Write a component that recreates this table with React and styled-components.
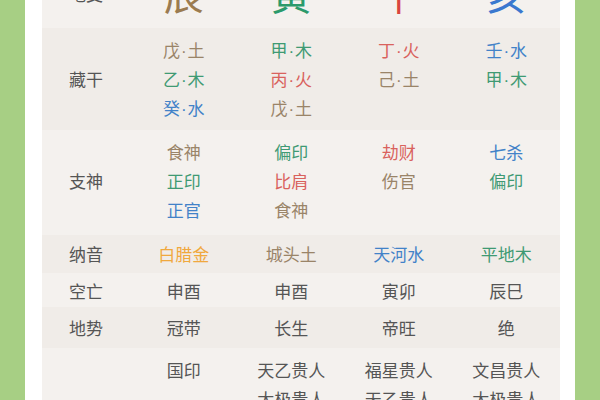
import React from "react";
import styled, { createGlobalStyle } from "styled-components";

const GlobalStyle = createGlobalStyle`
  html, body {
    margin: 0;
    padding: 0;
    width: 600px;
    height: 400px;
    overflow: hidden;
    background: #ffffff;
    font-family: "Noto Sans CJK SC", "Noto Sans", sans-serif;
  }
`;

const COLORS = {
  earth: "#9a8468",
  wood: "#3f9a73",
  fire: "#d9625d",
  water: "#4282c8",
  metal: "#f0a83e",
  plain: "#555555",
};

const Page = styled.div`
  display: flex;
  width: 600px;
  height: 400px;
  overflow: hidden;
`;

const GreenBar = styled.div`
  width: 25px;
  flex: none;
  background: #a7cf84;
`;

const Sheet = styled.div`
  flex: 1;
  background: #ffffff;
  padding: 0 15px 0 17px;
`;

const Table = styled.div`
  margin-top: -42px;
  display: flex;
  flex-direction: column;
`;

const Row = styled.div`
  display: grid;
  grid-template-columns: 88px repeat(4, 1fr);
  align-items: start;
  background: ${(p) => (p.$shade ? "#f0ece8" : "#f4f1ee")};
  padding: ${(p) => p.$pad || "0"};
`;

const Label = styled.div`
  align-self: center;
  text-align: center;
  font-size: 17px;
  line-height: 29px;
  color: #555;
`;

const Cell = styled.div`
  display: flex;
  flex-direction: column;
  align-items: center;
  align-self: ${(p) => (p.$center ? "center" : "start")};
`;

const Line = styled.div`
  height: 29px;
  font-size: 17px;
  line-height: 29px;
  color: ${(p) => COLORS[p.$el] || COLORS.plain};
  white-space: nowrap;
`;

const Dot = styled.span`
  font-family: "Liberation Sans", sans-serif;
  line-height: 1;
  margin: 0 1px;
`;

const Big = styled.span`
  font-size: 40px;
  line-height: 70px;
  color: ${(p) => p.$color};
`;

const branches = [
  { ch: "辰", color: "#9b7b50" },
  { ch: "寅", color: "#2b9a6b" },
  { ch: "午", color: "#d9443f" },
  { ch: "亥", color: "#3a78cf" },
];

const rows = [
  {
    label: "藏干",
    pad: "7px 0 8px",
    shade: true,
    cols: [
      [["戊·土", "earth"], ["乙·木", "wood"], ["癸·水", "water"]],
      [["甲·木", "wood"], ["丙·火", "fire"], ["戊·土", "earth"]],
      [["丁·火", "fire"], ["己·土", "earth"]],
      [["壬·水", "water"], ["甲·木", "wood"]],
    ],
  },
  {
    label: "支神",
    pad: "7px 0 11px",
    cols: [
      [["食神", "earth"], ["正印", "wood"], ["正官", "water"]],
      [["偏印", "wood"], ["比肩", "fire"], ["食神", "earth"]],
      [["劫财", "fire"], ["伤官", "earth"]],
      [["七杀", "water"], ["偏印", "wood"]],
    ],
  },
  {
    label: "纳音",
    pad: "4px 0 5px",
    shade: true,
    cols: [
      [["白腊金", "metal"]],
      [["城头土", "earth"]],
      [["天河水", "water"]],
      [["平地木", "wood"]],
    ],
  },
  {
    label: "空亡",
    pad: "3px 0 2px",
    cols: [[["申酉"]], [["申酉"]], [["寅卯"]], [["辰巳"]]],
  },
  {
    label: "地势",
    pad: "6px 0 6px",
    shade: true,
    cols: [[["冠带"]], [["长生"]], [["帝旺"]], [["绝"]]],
  },
  {
    label: "神煞",
    pad: "7px 0 8px",
    cols: [
      [["国印"]],
      [["天乙贵人"], ["太极贵人"], ["学堂"], ["月德贵人"]],
      [["福星贵人"], ["天乙贵人"], ["金舆"]],
      [["文昌贵人"], ["太极贵人"], ["驿马"]],
    ],
  },
];

const renderText = (text) => {
  const parts = text.split("·");
  if (parts.length < 2) return text;
  return (
    <>
      {parts[0]}
      <Dot>·</Dot>
      {parts[1]}
    </>
  );
};

const App = () => {
  return (
    <Page>
      <GlobalStyle />
      <GreenBar />
      <Sheet>
        <Table>
          <Row>
            <Label>地支</Label>
            {branches.map((b) => (
              <Cell key={b.ch} $center>
                <Big $color={b.color}>{b.ch}</Big>
              </Cell>
            ))}
          </Row>
          {rows.map((row) => (
            <Row key={row.label} $shade={row.shade} $pad={row.pad}>
              <Label>{row.label}</Label>
              {row.cols.map((col, i) => (
                <Cell key={i}>
                  {col.map(([text, el], j) => (
                    <Line key={j} $el={el}>
                      {renderText(text)}
                    </Line>
                  ))}
                </Cell>
              ))}
            </Row>
          ))}
        </Table>
      </Sheet>
      <GreenBar />
    </Page>
  );
};

export default App;
